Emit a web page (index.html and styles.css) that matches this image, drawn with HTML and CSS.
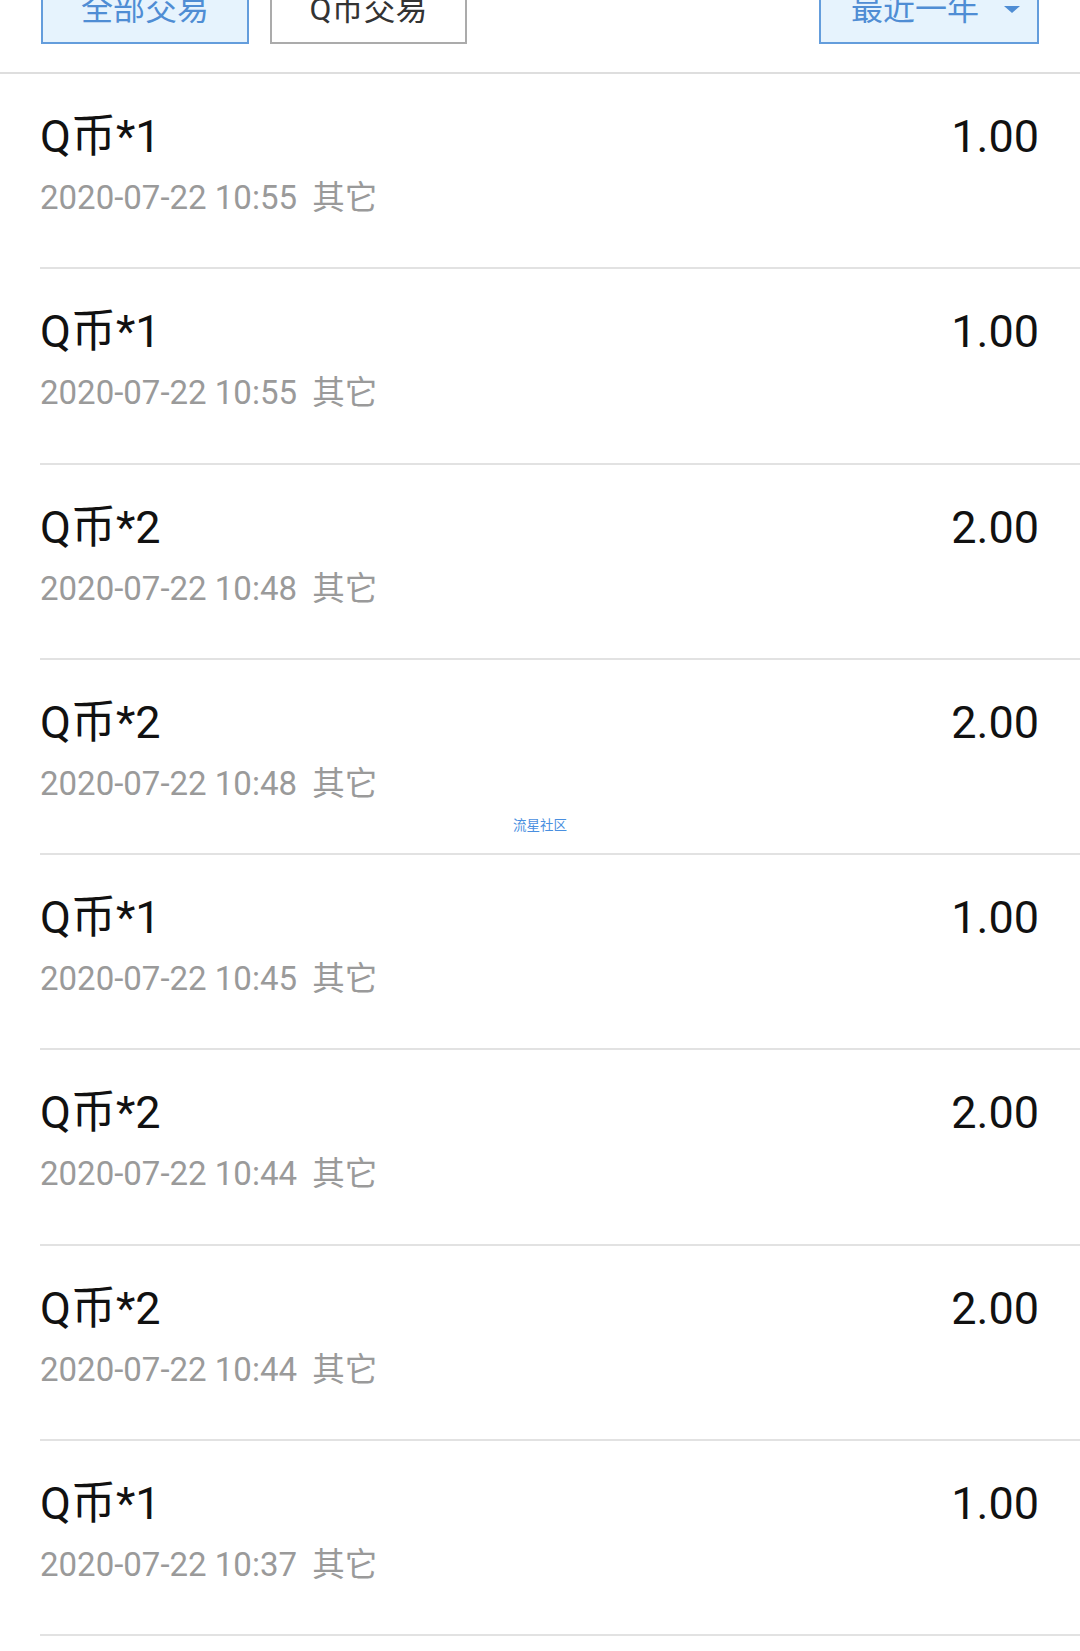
FILE: index.html
```html
<!DOCTYPE html>
<html lang="zh-CN">
<head>
    <meta charset="UTF-8">
    <meta name="viewport" content="width=device-width, initial-scale=1.0">
    <title>交易记录</title>
    <link rel="stylesheet" href="styles.css">
</head>
<body>
    <div class="filter-bar">
        <button class="filter-button active">全部交易</button>
        <button class="filter-button">Q币交易</button>
        <button class="filter-button range active">
            <span>最近一年</span>
            <span class="arrow"></span>
        </button>
    </div>

    <div class="record-list">
        <div class="record">
            <div class="record-info">
                <div class="record-title">Q币*1</div>
                <div class="record-meta">2020-07-22 10:55 <span class="record-type">其它</span></div>
            </div>
            <div class="record-amount">1.00</div>
        </div>
        <div class="record">
            <div class="record-info">
                <div class="record-title">Q币*1</div>
                <div class="record-meta">2020-07-22 10:55 <span class="record-type">其它</span></div>
            </div>
            <div class="record-amount">1.00</div>
        </div>
        <div class="record">
            <div class="record-info">
                <div class="record-title">Q币*2</div>
                <div class="record-meta">2020-07-22 10:48 <span class="record-type">其它</span></div>
            </div>
            <div class="record-amount">2.00</div>
        </div>
        <div class="record">
            <div class="record-info">
                <div class="record-title">Q币*2</div>
                <div class="record-meta">2020-07-22 10:48 <span class="record-type">其它</span></div>
            </div>
            <div class="record-amount">2.00</div>
        </div>
        <div class="record">
            <div class="record-info">
                <div class="record-title">Q币*1</div>
                <div class="record-meta">2020-07-22 10:45 <span class="record-type">其它</span></div>
            </div>
            <div class="record-amount">1.00</div>
        </div>
        <div class="record">
            <div class="record-info">
                <div class="record-title">Q币*2</div>
                <div class="record-meta">2020-07-22 10:44 <span class="record-type">其它</span></div>
            </div>
            <div class="record-amount">2.00</div>
        </div>
        <div class="record">
            <div class="record-info">
                <div class="record-title">Q币*2</div>
                <div class="record-meta">2020-07-22 10:44 <span class="record-type">其它</span></div>
            </div>
            <div class="record-amount">2.00</div>
        </div>
        <div class="record">
            <div class="record-info">
                <div class="record-title">Q币*1</div>
                <div class="record-meta">2020-07-22 10:37 <span class="record-type">其它</span></div>
            </div>
            <div class="record-amount">1.00</div>
        </div>
    </div>

    <div class="watermark">流星社区</div>
</body>
</html>
```

FILE: styles.css
```css
* {
    margin: 0;
    padding: 0;
    box-sizing: border-box;
    font-family: Roboto, "Noto Sans CJK SC", sans-serif;
}

body {
    position: relative;
    background: #fff;
    color: #111;
    overflow: hidden;
}

.filter-bar {
    display: flex;
    gap: 21px;
    margin-top: -26px;
    padding: 0 41px 28px 41px;
    border-bottom: 2px solid #dedede;
}

.filter-button {
    display: flex;
    align-items: center;
    justify-content: center;
    width: 197px;
    height: 70px;
    background: #fff;
    border: 2px solid #ababab;
    color: #333;
    font-size: 32px;
    line-height: 40px;
}

.filter-button:first-child {
    width: 208px;
}

.filter-button.active {
    background: #e6f3fd;
    border-color: #649ddc;
    color: #4f8dd4;
}

.filter-button.range {
    width: 220px;
    margin-left: auto;
    justify-content: space-between;
    padding: 0 17px 0 30px;
}

.arrow {
    width: 0;
    height: 0;
    border-left: 8px solid transparent;
    border-right: 8px solid transparent;
    border-top: 7px solid #4f8dd4;
}

.record {
    display: flex;
    justify-content: space-between;
    align-items: flex-start;
    height: 195.3px;
    margin-left: 40px;
    padding: 36px 41px 0 0;
    border-bottom: 2px solid #e2e2e2;
}

.record-title,
.record-amount {
    font-size: 45px;
    line-height: 54px;
    color: #111;
}

.record-meta {
    margin-top: 14px;
    font-size: 33px;
    line-height: 40px;
    color: #9a9a9a;
}

.record-type {
    margin-left: 7px;
    font-size: 32.5px;
}

.watermark {
    position: absolute;
    left: 513px;
    top: 814px;
    font-size: 13.5px;
    color: #4a8fe0;
}
```
